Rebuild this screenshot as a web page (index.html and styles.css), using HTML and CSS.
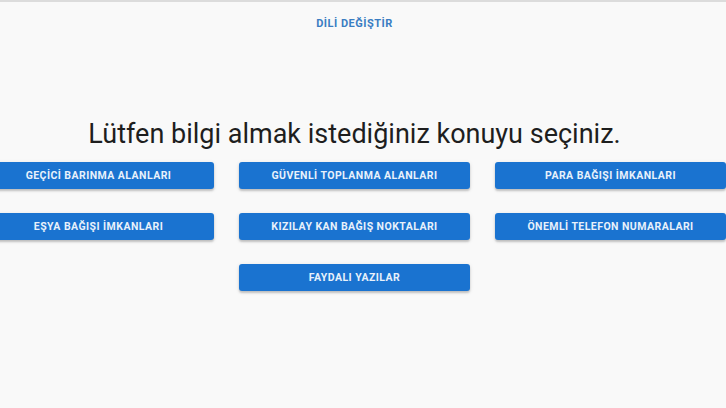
FILE: index.html
```html
<!DOCTYPE html>
<html lang="tr">
<head>
  <meta charset="UTF-8">
  <meta name="viewport" content="width=device-width, initial-scale=1.0">
  <title>Deprem Bilgi</title>
  <link rel="stylesheet" href="styles.css">
</head>
<body>

<div class="page">
  <header class="top">
    <button type="button" class="lang">Dili Değiştir</button>
  </header>

  <h1 class="title">Lütfen bilgi almak istediğiniz konuyu seçiniz.</h1>

  <div class="topics">
    <button type="button" class="topic">Geçici Barınma Alanları</button>
    <button type="button" class="topic">Güvenli Toplanma Alanları</button>
    <button type="button" class="topic">Para Bağışı İmkanları</button>
    <button type="button" class="topic">Eşya Bağışı İmkanları</button>
    <button type="button" class="topic">Kızılay Kan Bağış Noktaları</button>
    <button type="button" class="topic">Önemli Telefon Numaraları</button>
    <button type="button" class="topic topic-mid">Faydalı Yazılar</button>
  </div>
</div>

</body>
</html>
```

FILE: styles.css
```css
html, body {
  margin: 0;
  height: 100%;
}

body {
  font-family: Roboto, "Liberation Sans", Arial, sans-serif;
  background-color: #f9f9f9;
  border-top: 2px solid #dcdcdc;
  box-sizing: border-box;
  overflow: hidden;
}

.page {
  padding-right: 17px;
}

.top {
  height: 42px;
  display: flex;
  align-items: center;
  justify-content: center;
}

.lang {
  background: none;
  border: none;
  font-family: inherit;
  font-size: 11px;
  font-weight: 700;
  letter-spacing: 0.5px;
  text-transform: uppercase;
  color: #3a7dc2;
  cursor: pointer;
  padding: 4px 6px;
}

.title {
  margin: 72px 0 0;
  font-size: 27px;
  line-height: 36px;
  font-weight: 400;
  color: #1e1e1e;
  text-align: center;
}

.topics {
  margin-top: 10px;
  display: grid;
  grid-template-columns: repeat(3, 231px);
  column-gap: 25px;
  row-gap: 24px;
  justify-content: center;
}

.topic {
  height: 27px;
  background-color: #1a73d0;
  color: #e8f1fb;
  border: none;
  border-radius: 3px;
  box-shadow: 0 2px 2px rgba(0, 0, 0, 0.18), 0 1px 4px rgba(0, 0, 0, 0.1);
  font-family: inherit;
  font-size: 10.5px;
  font-weight: 700;
  letter-spacing: 0.45px;
  text-transform: uppercase;
  cursor: pointer;
}

.topic-mid {
  grid-column: 2;
}
```
